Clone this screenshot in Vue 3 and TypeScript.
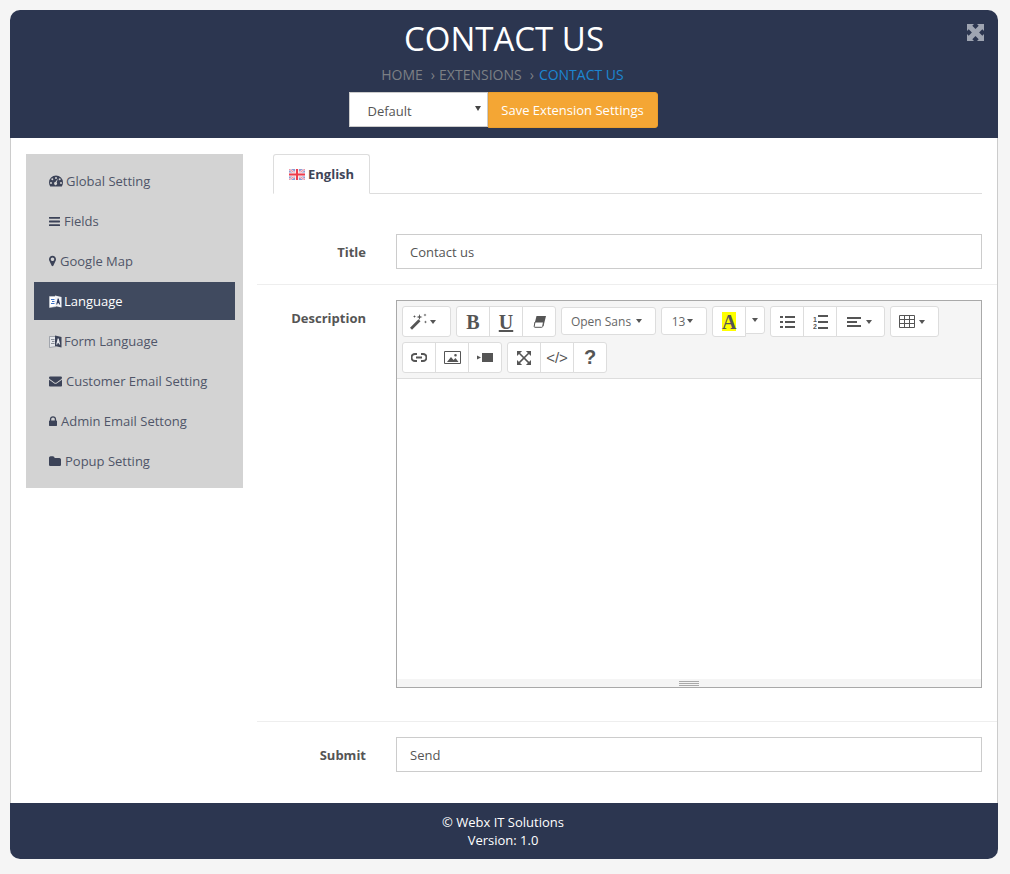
<script setup lang="ts">
interface NavItem {
  label: string
  kind: 'path' | 'lang' | 'gauge'
  width: number
  height: number
  box?: string
  d?: string
  active?: boolean
}

const nav: NavItem[] = [
  { label: 'Global Setting', kind: 'gauge', width: 14, height: 12 },
  { label: 'Fields', kind: 'path', width: 11, height: 13, box: '128 256 1536 1280', d: 'M1664 1344v128q0 26-19 45t-45 19h-1408q-26 0-45-19t-19-45v-128q0-26 19-45t45-19h1408q26 0 45 19t19 45zm0-512v128q0 26-19 45t-45 19h-1408q-26 0-45-19t-19-45v-128q0-26 19-45t45-19h1408q26 0 45 19t19 45zm0-512v128q0 26-19 45t-45 19h-1408q-26 0-45-19t-19-45v-128q0-26 19-45t45-19h1408q26 0 45 19t19 45z' },
  { label: 'Google Map', kind: 'path', width: 7, height: 12, box: '384 128 1024 1536', d: 'M1152 640q0-106-75-181t-181-75-181 75-75 181 75 181 181 75 181-75 75-181zm256 0q0 109-33 179l-364 774q-16 33-47.5 52t-67.5 19-67.5-19-46.5-52l-365-774q-33-70-33-179 0-212 150-362t362-150 362 150 150 362z' },
  { label: 'Language', kind: 'lang', width: 13, height: 13, active: true },
  { label: 'Form Language', kind: 'lang', width: 13, height: 13 },
  { label: 'Customer Email Setting', kind: 'path', width: 13, height: 11, box: '0 256 1792 1408', d: 'M1792 710v794q0 66-47 113t-113 47h-1472q-66 0-113-47t-47-113v-794q44 49 101 87 362 246 497 345 57 42 92.5 65.5t94.5 48 110 24.5h2q51 0 110-24.5t94.5-48 92.5-65.5q170-123 498-345 57-39 100-87zm0-294q0 79-49 151t-122 123q-376 261-468 325-10 7-42.5 30.5t-54 38-52 32.5-57.5 27-50 9h-2q-23 0-50-9t-57.5-27-52-32.5-54-38-42.5-30.5q-91-64-262-182.5t-205-142.5q-62-42-117-115.5t-55-136.5q0-78 41.5-130t118.5-52h1472q65 0 112.5 47t47.5 113z' },
  { label: 'Admin Email Settong', kind: 'path', width: 8, height: 11, box: '320 256 1152 1280', d: 'M640 768h512v-192q0-106-75-181t-181-75-181 75-75 181v192zm832 96v576q0 40-28 68t-68 28h-960q-40 0-68-28t-28-68v-576q0-40 28-68t68-28h32v-192q0-184 132-316t316-132 316 132 132 316v192h32q40 0 68 28t28 68z' },
  { label: 'Popup Setting', kind: 'path', width: 12, height: 10, box: '64 128 1664 1344', d: 'M1728 608v704q0 92-66 158t-158 66h-1216q-92 0-158-66t-66-158v-960q0-92 66-158t158-66h320q92 0 158 66t66 158v32h672q92 0 158 66t66 158z' }
]
</script>

<template>
  <div class="page">
    <div class="shell">
      <header class="top">
        <svg class="expand" width="17" height="17" viewBox="0 0 17 17" aria-hidden="true">
          <path fill="currentColor" d="M0 0h7L5.300 1.700 8.500 4.900 11.700 1.700 10 0h7v7l-1.700-1.700-3.200 3.200 3.200 3.200L17 10v7h-7l1.700-1.700-3.200-3.200-3.200 3.200L7 17H0v-7l1.700 1.700 3.200-3.200-3.200-3.200L0 7z" />
        </svg>
        <h1 class="title">CONTACT US</h1>
        <div class="crumbs">
          <span>HOME</span><span class="sep first">›</span><span>EXTENSIONS</span><span class="sep">›</span><span class="here">CONTACT US</span>
        </div>
        <div class="actions">
          <div class="store-wrap">
            <select class="store"><option>Default</option></select>
            <i class="store-arrow"></i>
          </div>
          <button class="save" type="button">Save Extension Settings</button>
        </div>
      </header>

      <div class="content">
        <aside class="side">
          <a v-for="item in nav" :key="item.label" class="nav-item" :class="{ active: item.active, lang: item.kind === 'lang', gauge: item.kind === 'gauge' }">
            <svg v-if="item.kind === 'gauge'" :width="item.width" :height="item.height" viewBox="0 0 14 12" aria-hidden="true">
              <path fill="currentColor" fill-rule="evenodd" d="M7 0.5a7 7 0 0 1 7 7c0 1.500-.4 2.800-1.200 4H1.200C.4 10.300 0 9 0 7.500a7 7 0 0 1 7-7zM7 2a1 1 0 1 0 0 2 1 1 0 0 0 0-2zM3.300 3.200a1 1 0 1 0 0 2 1 1 0 0 0 0-2zM10.700 3.200a1 1 0 1 0 0 2 1 1 0 0 0 0-2zM2 7a1 1 0 1 0 0 2 1 1 0 0 0 0-2zM12 7a1 1 0 1 0 0 2 1 1 0 0 0 0-2zM8.800 3.700L6.400 7.100a1.500 1.500 0 1 0 1.300.5z" />
            </svg>
            <svg v-else-if="item.kind === 'lang'" class="lang-icon" :width="item.width" :height="item.height" viewBox="0 0 13 13" aria-hidden="true">
              <path class="page-l" d="M.5 1.500H7v10L.5 12.500z" />
              <path class="mark-l" d="M2 4h3.500v1H2zM3 6h2.500v1H3zM2 8h3.500v1H2z" />
              <path class="page-r" d="M6 .5l6.500 1.500v10.500L6 11z" />
              <path class="mark-r" d="M8.700 3.500h1l1.500 6h-1l-.3-1.300H8.500L8.200 9.500h-1z" />
            </svg>
            <svg v-else :width="item.width" :height="item.height" :viewBox="item.box" aria-hidden="true">
              <path fill="currentColor" :d="item.d" />
            </svg>
            <span>{{ item.label }}</span>
          </a>
        </aside>

        <main class="main">
          <div class="tabs">
            <div class="tab">
              <svg width="16" height="11" viewBox="0 0 16 11" aria-hidden="true">
                <rect width="16" height="11" fill="#8f9bd2" />
                <path stroke="#f4e6ea" stroke-width="2.200" d="M0 0l16 11M16 0L0 11" />
                <path stroke="#f0738a" stroke-width=".8" d="M0 0l16 11M16 0L0 11" />
                <path stroke="#f7eef0" stroke-width="4" d="M8 0v11M0 5.500h16" />
                <path stroke="#ee3b4c" stroke-width="2" d="M8 0v11M0 5.500h16" />
              </svg>
              <span>English</span>
            </div>
          </div>

          <div class="row row-title">
            <label class="label">Title</label>
            <input class="field" value="Contact us" />
          </div>

          <div class="row row-desc">
            <label class="label label-desc">Description</label>
            <div class="editor">
              <div class="toolbar">
                <div class="tb-row">
                  <div class="group">
                    <button class="tb w49 pad7" type="button">
                      <svg width="18" height="17" viewBox="0 0 18 17" aria-hidden="true">
                        <path fill="#555" d="M0 14.800L8.500 6.300l2 2L2 16.800zM9.500 1l.7 2.300 2.300.7-2.300.7-.7 2.300-.7-2.300L6.500 4l2.300-.7zM15 .5l.4 1.100 1.100.4-1.100.4L15 3.500l-.4-1.100-1.100-.4 1.100-.4zM15.500 7.500l.4 1.100 1.100.4-1.100.4-.4 1.100-.4-1.100-1.100-.4 1.100-.4zM4.500 2l.4 1.100 1.100.4-1.100.4-.4 1.100-.4-1.100L3 3.500l1.100-.4z" />
                      </svg>
                      <i class="caret"></i>
                    </button>
                  </div>
                  <div class="group">
                    <button class="tb w34 glyph" type="button"><b>B</b></button>
                    <button class="tb w33 glyph" type="button"><b class="under">U</b></button>
                    <button class="tb w33" type="button">
                      <svg width="13" height="12" viewBox="0 0 13 12" aria-hidden="true">
                        <path fill="#555" d="M3.500 0H13l-2.500 10H1z" />
                        <path fill="#fff" stroke="#555" d="M2 6h8.500L9.700 10.500q-.2.800-1 .8H2q-1 0-.8-1z" />
                      </svg>
                    </button>
                  </div>
                  <div class="group slim"><button class="tb w95 txt pad4" type="button">Open Sans <i class="caret gap"></i></button></div>
                  <div class="group slim"><button class="tb w46 txt pad3" type="button">13<i class="caret"></i></button></div>
                  <div class="group">
                    <button class="tb w34 glyph" type="button"><b class="hilite">A</b></button>
                    <button class="tb w19 short" type="button"><i class="caret"></i></button>
                  </div>
                  <div class="group">
                    <button class="tb w34" type="button">
                      <svg width="15" height="12" viewBox="0 0 15 12" aria-hidden="true"><path fill="#555" d="M0 0h3v2H0zM5 0h10v2H5zM0 5h3v2H0zM5 5h10v2H5zM0 10h3v2H0zM5 10h10v2H5z" /></svg>
                    </button>
                    <button class="tb w33" type="button">
                      <svg width="15" height="14" viewBox="0 0 15 14" aria-hidden="true">
                        <text x="0" y="6.500" class="num">1</text>
                        <text x="0" y="13.500" class="num">2</text>
                        <path fill="#555" d="M5 0h10v2H5zM5 6h10v2H5zM5 12h10v2H5z" />
                      </svg>
                    </button>
                    <button class="tb w48 pad5" type="button">
                      <svg width="14" height="10" viewBox="0 0 14 10" aria-hidden="true"><path fill="#555" d="M0 0h14v2H0zM0 4h10v2H0zM0 8h14v2H0z" /></svg>
                      <i class="caret gap"></i>
                    </button>
                  </div>
                  <div class="group">
                    <button class="tb w49 pad6 gap4" type="button">
                      <svg width="16" height="13" viewBox="0 0 16 13" aria-hidden="true"><path fill="none" stroke="#555" d="M.5.500h15v12H.500zM.5 4.500h15M.5 8.500h15M5.500.5v12M10.500.5v12" /></svg>
                      <i class="caret"></i>
                    </button>
                  </div>
                </div>
                <div class="tb-row">
                  <div class="group">
                    <button class="tb w34" type="button">
                      <svg width="16" height="9" viewBox="0 0 16 9" aria-hidden="true"><path fill="none" stroke="#555" stroke-width="2" d="M6 1H4a3.500 3.500 0 0 0 0 7h2M10 1h2a3.500 3.500 0 0 1 0 7h-2M5 4.500h6" /></svg>
                    </button>
                    <button class="tb w33" type="button">
                      <svg width="17" height="13" viewBox="0 0 17 13" aria-hidden="true"><path fill="none" stroke="#555" d="M.5.500h16v12H.500z" /><path fill="#555" d="M3 11l4-5 2.500 3 2-2L14.500 11zM11.500 3a1.300 1.300 0 1 1 0 2.600 1.300 1.300 0 0 1 0-2.600z" /></svg>
                    </button>
                    <button class="tb w33" type="button">
                      <svg width="16" height="9" viewBox="0 0 16 9" aria-hidden="true"><path fill="#555" d="M5 0h11v9H5zM0 2.500L4 4.500 0 6.500z" /></svg>
                    </button>
                  </div>
                  <div class="group">
                    <button class="tb w34" type="button">
                      <svg width="14" height="14" viewBox="128 128 1536 1536" aria-hidden="true"><path fill="none" stroke="#555" stroke-width="170" d="M300 300l1190 1190M1490 300L300 1490" /><path fill="#555" d="M128 128h560L128 688zM1664 128v560L1104 128zM128 1664v-560l560 560zM1664 1664h-560l560-560z" /></svg>
                    </button>
                    <button class="tb w33 code" type="button">&lt;/&gt;</button>
                    <button class="tb w33 help" type="button">?</button>
                  </div>
                </div>
              </div>
              <div class="canvas"></div>
              <div class="resize"><span></span></div>
            </div>
          </div>

          <div class="row row-submit">
            <label class="label">Submit</label>
            <input class="field" value="Send" />
          </div>
        </main>
      </div>

      <footer class="foot">
        <div>© Webx IT Solutions</div>
        <div>Version: 1.0</div>
      </footer>
    </div>
  </div>
</template>

<style>
html, body { margin: 0; background: #f5f5f5; }
</style>

<style scoped>
* { box-sizing: border-box; }
.page {
  width: 1010px;
  height: 874px;
  padding: 10px 12px 15px 10px;
  background: #f5f5f5;
  font-family: "Open Sans", "Liberation Sans", sans-serif;
  font-size: 13px;
  color: #555;
}
.shell {
  width: 988px;
  height: 849px;
  display: flex;
  flex-direction: column;
  border-radius: 10px;
  overflow: hidden;
  background: #fff;
}
.top {
  position: relative;
  height: 128px;
  flex: none;
  background: #2c3650;
  text-align: center;
  padding-top: 6px;
}
.expand { position: absolute; right: 14px; top: 14px; color: #9fa5b2; }
.title {
  margin: 0;
  height: 45px;
  font-size: 33px;
  line-height: 45px;
  font-weight: 400;
  color: #fff;
}
.crumbs {
  margin-top: 4px;
  height: 20px;
  padding-right: 3px;
  font-size: 14px;
  line-height: 20px;
  color: #7c8085;
}
.sep { margin: 0 5px 0 8px; }
.sep.first { margin-right: 4px; }
.here { color: #1c86d1; }
.actions {
  margin-top: 7px;
  padding-right: 2px;
  display: flex;
  justify-content: center;
  align-items: flex-start;
}
.store-wrap { position: relative; width: 139px; height: 35px; }
.store {
  display: block;
  width: 139px;
  height: 35px;
  padding: 2px 0 0 18px;
  appearance: none;
  border: 1px solid #ccc;
  border-radius: 0;
  background: #fff;
  font: 13px "Open Sans", sans-serif;
  color: #555;
}
.store-arrow {
  position: absolute;
  left: 126px;
  top: 14px;
  width: 0;
  height: 0;
  border-left: 3px solid transparent;
  border-right: 3px solid transparent;
  border-top: 5px solid #444;
}
.save {
  width: 170px;
  height: 36px;
  border: 1px solid #eb9f2c;
  border-radius: 0 3px 3px 0;
  background: #f4a634;
  color: #fff;
  font: 400 13px "Open Sans", sans-serif;
}
.content {
  flex: 1;
  display: flex;
  align-items: flex-start;
  border-left: 1px solid #ccc;
  border-right: 1px solid #ccc;
  padding: 16px 0 0 15px;
  min-height: 0;
}
.side {
  width: 217px;
  flex: none;
  background: #d3d3d3;
  padding: 8px;
  display: flex;
  flex-direction: column;
  gap: 2px;
}
.nav-item {
  height: 38px;
  display: flex;
  align-items: center;
  gap: 4px;
  padding-left: 15px;
  color: #4f5568;
  font-size: 13px;
}
.nav-item.lang { gap: 2px; }
.nav-item.gauge { gap: 3px; }
.nav-item svg { flex: none; color: #3c4358; }
.nav-item.active { background: #404a5f; color: #fff; }
.nav-item.active svg { color: #fff; }
.page-l { fill: #e4e6ea; stroke: #7a808c; stroke-width: .6; }
.mark-l { fill: #8a8f99; }
.page-r { fill: #3c4358; }
.mark-r { fill: #e8eaf0; }
.active .page-l { fill: #fff; stroke: #cfd3da; }
.active .mark-l { fill: #3b6fc4; }
.active .page-r { fill: #f1f2f5; }
.active .mark-r { fill: #2d3a5c; }
.main {
  width: 740px;
  margin-left: 14px;
  margin-right: 1px;
}
.tabs {
  margin: 0 15px 0 16px;
  height: 40px;
  border-bottom: 1px solid #ddd;
}
.tab {
  width: 97px;
  height: 40px;
  display: flex;
  align-items: center;
  gap: 3px;
  padding: 0 0 0 15px;
  border: 1px solid #ddd;
  border-bottom: 1px solid #fff;
  border-radius: 3px 3px 0 0;
  background: #fff;
  font-weight: 700;
  color: #3f4558;
}
.row {
  display: flex;
  align-items: flex-start;
  padding: 15px 15px 15px 0;
}
.row-title { margin-top: 25px; height: 66px; border-bottom: 1px solid #eee; }
.row-desc { height: 437px; border-bottom: 1px solid #eee; }
.row-submit { height: 66px; }
.label {
  width: 109px;
  flex: none;
  height: 35px;
  margin-right: 30px;
  text-align: right;
  font-weight: 700;
  line-height: 36px;
  color: #555;
}
.field {
  width: 586px;
  height: 35px;
  padding: 0 13px;
  border: 1px solid #ccc;
  background: #fff;
  font: 13px "Open Sans", sans-serif;
  color: #555;
  outline: none;
}
.editor {
  width: 586px;
  height: 388px;
  display: flex;
  flex-direction: column;
  border: 1px solid #a9a9a9;
  background: #fff;
}
.toolbar {
  height: 78px;
  flex: none;
  display: flex;
  flex-direction: column;
  gap: 5px;
  padding: 5px;
  background: #f5f5f5;
  border-bottom: 1px solid #ddd;
}
.tb-row { display: flex; gap: 5px; }
.group { display: flex; align-items: flex-start; height: 31px; }
.tb {
  height: 31px;
  margin-left: -1px;
  padding: 0;
  display: flex;
  align-items: center;
  justify-content: center;
  gap: 2px;
  border: 1px solid #ddd;
  background: #fff;
  color: #555;
  font-family: "Open Sans", sans-serif;
  font-size: 12px;
}
.tb:first-child { margin-left: 0; border-radius: 3px 0 0 3px; }
.tb:last-child { border-radius: 0 3px 3px 0; }
.tb:only-child { border-radius: 3px; }
.w19 { width: 20px; }
.w33 { width: 34px; }
.w34 { width: 34px; }
.w46 { width: 46px; }
.w48 { width: 49px; }
.w49 { width: 49px; }
.w95 { width: 95px; }
.pad3 { padding-right: 3px; }
.pad4 { padding-right: 4px; }
.pad5 { padding-right: 4px; padding-left: 1px; }
.pad6 { padding-right: 6px; }
.pad7 { padding-right: 7px; }
.gap4 { gap: 4px; }
.short { height: 28px; }
.slim { padding-top: 1px; }
.slim .tb { height: 28px; }
.txt { font-size: 12px; color: #666; }
.num { font: 700 7px "Liberation Sans", sans-serif; fill: #555; }
.caret {
  display: inline-block;
  width: 0;
  height: 0;
  border-left: 3px solid transparent;
  border-right: 3px solid transparent;
  border-top: 4px solid #555;
}
.gap { margin-left: 3px; }
.glyph {
  font-family: "Liberation Serif", serif;
  font-size: 20px;
}
.glyph b { font-weight: 700; color: #555; line-height: 1; }
.under { text-decoration: underline; text-underline-offset: 1px; }
.hilite {
  display: inline-block;
  width: 14px;
  height: 19px;
  line-height: 19px;
  background: #ff0;
  text-align: center;
}
.code { font: 15px "Liberation Sans", sans-serif; color: #555; }
.help { font: 700 20px "Liberation Sans", sans-serif; color: #555; }
.canvas { flex: 1; background: #fff; }
.resize {
  height: 8px;
  flex: none;
  display: flex;
  justify-content: center;
  align-items: center;
  background: #f5f5f5;
}
.resize span {
  width: 20px;
  height: 5px;
  border-top: 1px solid #a9a9a9;
  border-bottom: 1px solid #a9a9a9;
  background: linear-gradient(#a9a9a9, #a9a9a9) center / 100% 1px no-repeat;
}
.foot {
  height: 56px;
  flex: none;
  background: #2c3650;
  color: #fff;
  text-align: center;
  font-weight: 400;
  font-size: 13px;
  line-height: 18px;
  padding: 10px 2px 0 0;
}
</style>
